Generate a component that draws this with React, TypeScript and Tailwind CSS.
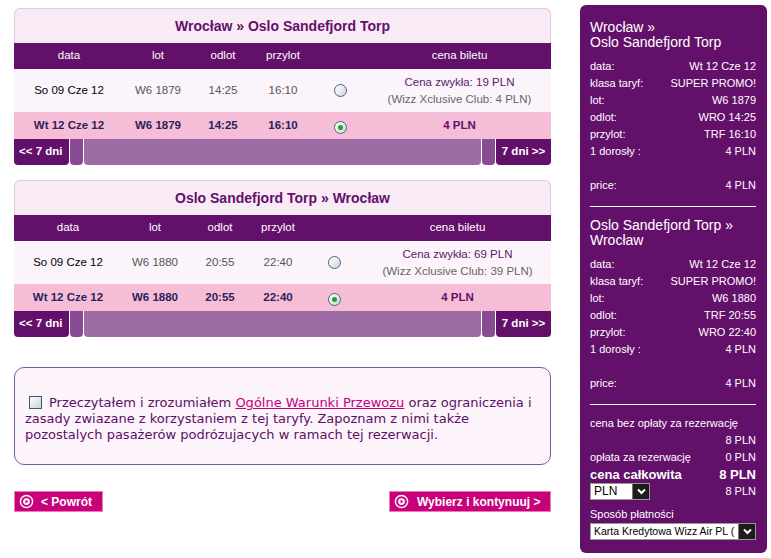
import React from "react";

// dane lotów
interface Flight {
  title: string;
  cols: number[];
  normal: { date: string; lot: string; dep: string; arr: string; price: string; club: string };
  selected: { date: string; lot: string; dep: string; arr: string; price: string };
}

const flights: Flight[] = [
  {
    title: "Wrocław » Oslo Sandefjord Torp",
    cols: [110, 68, 62, 58, 56, 183],
    normal: { date: "So 09 Cze 12", lot: "W6 1879", dep: "14:25", arr: "16:10", price: "Cena zwykła: 19 PLN", club: "(Wizz Xclusive Club: 4 PLN)" },
    selected: { date: "Wt 12 Cze 12", lot: "W6 1879", dep: "14:25", arr: "16:10", price: "4 PLN" },
  },
  {
    title: "Oslo Sandefjord Torp » Wrocław",
    cols: [108, 66, 64, 52, 60, 187],
    normal: { date: "So 09 Cze 12", lot: "W6 1880", dep: "20:55", arr: "22:40", price: "Cena zwykła: 69 PLN", club: "(Wizz Xclusive Club: 39 PLN)" },
    selected: { date: "Wt 12 Cze 12", lot: "W6 1880", dep: "20:55", arr: "22:40", price: "4 PLN" },
  },
];

const Radio = ({ checked }: { checked?: boolean }) => (
  <span className="inline-flex w-[13px] h-[13px] rounded-full border border-[#3e6795] bg-gradient-to-br from-white to-[#d4d4d4] items-center justify-center">
    {checked && <span className="w-[5px] h-[5px] rounded-full bg-[#1fa51f]" />}
  </span>
);

const FlightPanel = ({ f }: { f: Flight }) => (
  <div className="w-[537px]">
    <div className="h-[35px] rounded-t-[6px] border border-b-0 border-[#e2c8e2] bg-[#f8ebf6] flex items-center justify-center font-bold text-[14px] text-[#63106a]">
      {f.title}
    </div>
    <table className="w-full border-collapse table-fixed text-[11.5px]">
      <colgroup>
        {f.cols.map((w, i) => (
          <col key={i} style={{ width: w }} />
        ))}
      </colgroup>
      <thead>
        <tr className="h-[26px] bg-[#63106a] text-white">
          <th className="font-normal">data</th>
          <th className="font-normal">lot</th>
          <th className="font-normal">odlot</th>
          <th className="font-normal">przylot</th>
          <th className="font-normal"></th>
          <th className="font-normal">cena biletu</th>
        </tr>
      </thead>
      <tbody>
        <tr className="h-[43px] bg-[#fcf4fb] text-center">
          <td className="text-black">{f.normal.date}</td>
          <td className="text-[#555]">{f.normal.lot}</td>
          <td className="text-[#555]">{f.normal.dep}</td>
          <td className="text-[#555]">{f.normal.arr}</td>
          <td className="pt-[5px]"><Radio /></td>
          <td className="leading-[17px]">
            <div className="text-[#5b1a68]">{f.normal.price}</div>
            <div className="text-[#666]">{f.normal.club}</div>
          </td>
        </tr>
        <tr className="h-[27px] bg-[#f6bdd6] text-center font-bold text-[#2b1f5c]">
          <td>{f.selected.date}</td>
          <td>{f.selected.lot}</td>
          <td>{f.selected.dep}</td>
          <td>{f.selected.arr}</td>
          <td className="pt-[3px]"><Radio checked /></td>
          <td className="text-[#63106a]">{f.selected.price}</td>
        </tr>
      </tbody>
    </table>
    <div className="flex h-[26px] gap-px text-[11.5px] font-bold text-white">
      <div className="w-[55px] rounded-b-[4px] bg-[#63106a] flex items-center pl-[5px]">&lt;&lt; 7 dni</div>
      <div className="w-[13px] rounded-b-[4px] bg-[#8b4b94]" />
      <div className="flex-1 rounded-b-[4px] bg-[#9e6ca4]" />
      <div className="w-[13px] rounded-b-[4px] bg-[#8b4b94]" />
      <div className="w-[55px] rounded-b-[4px] bg-[#63106a] flex items-center justify-center">7 dni &gt;&gt;</div>
    </div>
  </div>
);

const BtnIcon = () => (
  <svg width="15" height="15" viewBox="0 0 16 16" className="shrink-0">
    <circle cx="8" cy="8" r="6.5" fill="none" stroke="white" strokeWidth="1.6" />
    <circle cx="8" cy="8" r="3.6" fill="white" />
    <polygon points="7,6 10,8 7,10" fill="#c8007a" />
  </svg>
);

const Select = ({ label, className, size }: { label: string; className: string; size: string }) => (
  <div className={`h-[17px] flex bg-white border border-[#999] ${className}`}>
    <div className={`flex-1 overflow-hidden whitespace-nowrap text-black leading-[15px] pl-[3px] ${size}`}>{label}</div>
    <div className="w-[17px] bg-[#1c1c1c] border-l border-[#777] flex items-center justify-center">
      <svg width="9" height="7" viewBox="0 0 9 7">
        <path d="M1 1.5 L4.5 5 L8 1.5" fill="none" stroke="white" strokeWidth="2" />
      </svg>
    </div>
  </div>
);

const Row = ({ l, r, bold }: { l: string; r: string; bold?: boolean }) => (
  <div className={`flex justify-between h-[17px] leading-[17px] ${bold ? "font-bold text-[13px]" : ""}`}>
    <span>{l}</span>
    <span>{r}</span>
  </div>
);

const Leg = ({ t1, t2, rows }: { t1: string; t2: string; rows: string[][] }) => (
  <div>
    <div className="text-[14px] leading-[15px]">
      <div>{t1}</div>
      <div>{t2}</div>
    </div>
    <div className="mt-[8px]">
      {rows.map((r, i) => (
        <Row key={i} l={r[0]} r={r[1]} />
      ))}
      <div className="h-[17px]" />
      <Row l="price:" r="4 PLN" />
    </div>
  </div>
);

export default function App() {
  return (
    <div className="flex font-['Liberation_Sans',Arial,sans-serif] bg-white w-[771px] h-[558px]">
      {/* lewa kolumna */}
      <div className="ml-[14px] mt-[8px] w-[537px]">
        <FlightPanel f={flights[0]} />
        <div className="mt-[15px]">
          <FlightPanel f={flights[1]} />
        </div>

        <div className="mt-[30px] h-[98px] rounded-[10px] border border-[#7a56a6] bg-[#fdf3fa] pl-[10px] pt-[27px] font-['DejaVu_Sans',Verdana,sans-serif] text-[13px] leading-[16px] text-[#5a1166] whitespace-nowrap">
          <span className="inline-block align-[-2px] w-[13px] h-[13px] border border-[#2e5a86] bg-gradient-to-br from-white to-[#cfcfcf] ml-[4px] mr-[7px]" />
          Przeczytałem i zrozumiałem{" "}
          <span className="text-[#c4007e] underline">Ogólne Warunki Przewozu</span> oraz ograniczenia i
          <br />
          zasady zwiazane z korzystaniem z tej taryfy. Zapoznam z nimi także
          <br />
          pozostalych pasażerów podrózujacych w ramach tej rezerwacji.
        </div>

        <div className="mt-[26px] flex justify-between">
          <div className="h-[21px] w-[89px] bg-[#c8007a] border border-[#ee78b8] flex items-center gap-[7px] pl-[4px] text-white font-bold text-[12px]">
            <BtnIcon />
            <span>&lt; Powrót</span>
          </div>
          <div className="h-[21px] w-[162px] bg-[#c8007a] border border-[#ee78b8] flex items-center gap-[8px] pl-[4px] text-white font-bold text-[12px]">
            <BtnIcon />
            <span>Wybierz i kontynuuj &gt;</span>
          </div>
        </div>
      </div>

      {/* podsumowanie */}
      <div className="ml-[29px] mt-[5px] w-[187px] h-[548px] rounded-[6px] bg-[#63106a] text-white text-[11px] pl-[10px] pr-[11px] pt-[15px]">
        <Leg
          t1="Wrocław »"
          t2="Oslo Sandefjord Torp"
          rows={[
            ["data:", "Wt 12 Cze 12"],
            ["klasa taryf:", "SUPER PROMO!"],
            ["lot:", "W6 1879"],
            ["odlot:", "WRO 14:25"],
            ["przylot:", "TRF 16:10"],
            ["1 dorosły :", "4 PLN"],
          ]}
        />
        <div className="mt-[12px] h-px bg-white" />
        <div className="mt-[11px]">
          <Leg
            t1="Oslo Sandefjord Torp »"
            t2="Wrocław"
            rows={[
              ["data:", "Wt 12 Cze 12"],
              ["klasa taryf:", "SUPER PROMO!"],
              ["lot:", "W6 1880"],
              ["odlot:", "TRF 20:55"],
              ["przylot:", "WRO 22:40"],
              ["1 dorosły :", "4 PLN"],
            ]}
          />
        </div>
        <div className="mt-[12px] h-px bg-white" />
        <div className="mt-[10px]">
          <div className="h-[17px] leading-[17px]">cena bez opłaty za rezerwację</div>
          <div className="h-[17px] leading-[17px] text-right">8 PLN</div>
          <Row l="opłata za rezerwację" r="0 PLN" />
          <Row l="cena całkowita" r="8 PLN" bold />
          <div className="flex justify-between items-center h-[17px]">
            <Select label="PLN" className="w-[60px]" size="text-[12px]" />
            <span>8 PLN</span>
          </div>
          <div className="mt-[7px] h-[15px] leading-[15px]">Sposób płatności</div>
          <Select label="Karta Kredytowa Wizz Air PL (" className="mt-[1px] w-[166px]" size="text-[10.5px]" />
        </div>
      </div>
    </div>
  );
}
